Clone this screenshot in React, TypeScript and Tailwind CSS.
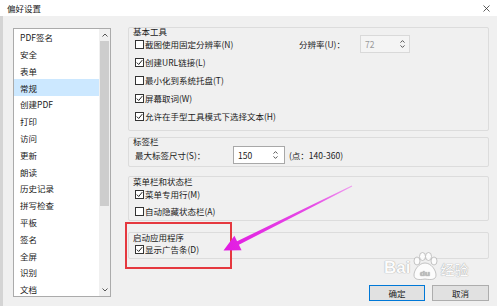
import React from 'react';

const items = [
  'PDF签名', '安全', '表单', '常规', '创建PDF', '打印', '访问', '更新',
  '朗读', '历史记录', '拼写检查', '平板', '签名', '全屏', '识别', '文档',
];

function Check({ checked }: { checked?: boolean }) {
  return (
    <span className="w-[9px] h-[9px] border border-[#333] bg-white flex items-center justify-center shrink-0">
      {checked && (
        <svg width="7" height="7" viewBox="0 0 7 7">
          <path d="M0.8 3.6 L2.7 5.5 L6.3 1.1" fill="none" stroke="#222" strokeWidth="1" />
        </svg>
      )}
    </span>
  );
}

function Spin() {
  return (
    <svg width="5" height="10" viewBox="0 0 5 10">
      <path d="M0.5 3.6 L2.5 1.6 L4.5 3.6 M0.5 6.4 L2.5 8.4 L4.5 6.4" fill="none" stroke="#444" strokeWidth="0.9" />
    </svg>
  );
}

function Row({ label, checked, h = 'h-[18px]' }: { label: string; checked?: boolean; h?: string }) {
  return (
    <div className={`${h} flex items-center pl-[6px] gap-[1px]`}>
      <Check checked={checked} />
      <span>{label}</span>
    </div>
  );
}

export default function App() {
  return (
    <div className="relative w-[497px] h-[306px] bg-[#f0f0f0] overflow-hidden font-['Noto_Sans_CJK_SC','Liberation_Sans',sans-serif] text-[8.5px] leading-none text-[#1a1a1a]">
      {/* Title bar */}
      <div className="h-[16px] bg-white flex items-center justify-between pl-[7px] pr-[7px]">
        <span className="text-[8.5px]">偏好设置</span>
        <svg width="7" height="7" viewBox="0 0 7 7">
          <path d="M0.5 0.5 L6.5 6.5 M6.5 0.5 L0.5 6.5" stroke="#333" strokeWidth="0.8" />
        </svg>
      </div>

      <div className="flex items-start pl-[10px] border-l-[3px] border-[#d4d4d4] h-[290px]">
        {/* Category list */}
        <div className="mt-[12px] w-[98px] h-[269px] border border-[#ababab] bg-white flex overflow-hidden">
          <div className="w-[85px]">
            {items.map((it) => (
              <div
                key={it}
                className={`h-[16.8px] flex items-center pl-[6px] ${it === '常规' ? 'bg-[#cce8ff]' : ''}`}
              >
                {it}
              </div>
            ))}
          </div>
          <div className="w-[11px] flex flex-col bg-[#f0f0f0]">
            <div className="h-[12px] flex items-center justify-center">
              <svg width="6" height="4" viewBox="0 0 6 4">
                <path d="M0.5 3.5 L3 1 L5.5 3.5" fill="none" stroke="#555" strokeWidth="1" />
              </svg>
            </div>
            <div className="h-[165px] mx-[1px] bg-[#cdcdcd]" />
            <div className="flex-1" />
            <div className="h-[12px] flex items-center justify-center">
              <svg width="6" height="4" viewBox="0 0 6 4">
                <path d="M0.5 0.5 L3 3 L5.5 0.5" fill="none" stroke="#555" strokeWidth="1" />
              </svg>
            </div>
          </div>
        </div>

        {/* Settings */}
        <div className="ml-[17px] mt-[11px] w-[361px] flex flex-col">
          <div className="border border-[#dcdcdc] rounded-[2px] pb-[5px]">
            <div className="h-[7px] flex items-center pl-[4px]">基本工具</div>
            <div className="h-[18px] flex items-center pl-[6px]">
              <Check />
              <span className="ml-[1px]">截图使用固定分辨率(N)</span>
              <span className="ml-auto">分辨率(U)：</span>
              <div className="ml-[15px] mr-[78px] w-[50px] h-[18px] border border-[#d9d9d9] bg-[#f4f4f4] flex items-center justify-between pl-[4px] pr-[4px] text-[#9a9a9a]">
                <span>72</span>
                <Spin />
              </div>
            </div>
            <Row label="创建URL链接(L)" checked />
            <Row label="最小化到系统托盘(T)" />
            <Row label="屏幕取词(W)" checked />
            <Row label="允许在手型工具模式下选择文本(H)" checked />
          </div>

          <div className="mt-[6px] border border-[#dcdcdc] rounded-[2px] pb-[1px]">
            <div className="h-[7px] flex items-center pl-[4px]">标签栏</div>
            <div className="h-[20px] flex items-center pl-[6px]">
              <span className="w-[98px]">最大标签尺寸(S)：</span>
              <div className="w-[52px] h-[18px] border border-[#a8a8a8] bg-white flex items-center justify-between pl-[4px] pr-[6px]">
                <span>150</span>
                <Spin />
              </div>
              <span className="ml-[4px]">(点：140-360)</span>
            </div>
          </div>

          <div className="mt-[9px] border border-[#dcdcdc] rounded-[2px]">
            <div className="h-[9px] flex items-center pl-[4px]">菜单栏和状态栏</div>
            <Row label="菜单专用行(M)" checked h="h-[17px]" />
            <Row label="自动隐藏状态栏(A)" h="h-[17px]" />
          </div>

          <div className="mt-[11px] border border-[#dcdcdc] rounded-[2px]">
            <div className="h-[8px] flex items-center pl-[4px]">启动应用程序</div>
            <Row label="显示广告条(D)" checked h="h-[17px]" />
          </div>

          <div className="mt-[26px] flex justify-end gap-[7px]">
            <button className="w-[56px] h-[16px] border border-[#0078d7] bg-[#e1e1e1] flex items-center justify-center text-[8.5px]">
              确定
            </button>
            <button className="w-[57px] h-[16px] border border-[#adadad] bg-[#e1e1e1] flex items-center justify-center text-[8.5px]">
              取消
            </button>
          </div>
        </div>
      </div>

      {/* Annotation: red box */}
      <div className="absolute left-[125px] top-[222px] w-[107px] h-[47px] border-2 border-[#e5383f]" />

      {/* Annotation: magenta arrow */}
      <svg className="absolute left-0 top-0" width="497" height="306" viewBox="0 0 497 306">
        <defs>
          <linearGradient id="ag" x1="352" y1="186" x2="224" y2="250" gradientUnits="userSpaceOnUse">
            <stop offset="0" stopColor="#f0a0f0" />
            <stop offset="0.3" stopColor="#e64de6" />
            <stop offset="1" stopColor="#e21be2" />
          </linearGradient>
        </defs>
        <polygon
          points="352.2,186.4 238.9,244.8 241.6,250.3 223.5,250.4 234.4,235.8 237.1,241.2 351.8,185.6"
          fill="url(#ag)"
        />
      </svg>

      {/* Baidu watermark */}
      <div className="absolute left-[384px] top-[252px] flex items-end gap-[1px] text-white opacity-80 [text-shadow:0_0_1px_#9a9a9a,0_0_1px_#9a9a9a]">
        <span className="font-['Liberation_Sans',sans-serif] text-[17px] font-bold leading-none pb-[6px]">Bai</span>
        <svg width="28" height="30" viewBox="0 0 28 30">
          <g fill="#ffffff" stroke="#a8a8a8" strokeWidth="0.8">
            <ellipse cx="6" cy="9" rx="3" ry="4" />
            <ellipse cx="11.5" cy="4.5" rx="3" ry="4" />
            <ellipse cx="17.5" cy="4.5" rx="3" ry="4" />
            <ellipse cx="23" cy="9" rx="3" ry="4" />
            <path d="M14 11 C8 11 3 18 3 23 C3 28 8 28 14 27 C20 28 25 28 25 23 C25 18 20 11 14 11 Z" />
          </g>
          <text x="14" y="24" textAnchor="middle" fontSize="8" fontWeight="bold" fill="#b0b0b0" fontFamily="Liberation Sans, sans-serif">du</text>
        </svg>
        <span className="text-[14px] leading-none pb-[6px]">经验</span>
      </div>
    </div>
  );
}
